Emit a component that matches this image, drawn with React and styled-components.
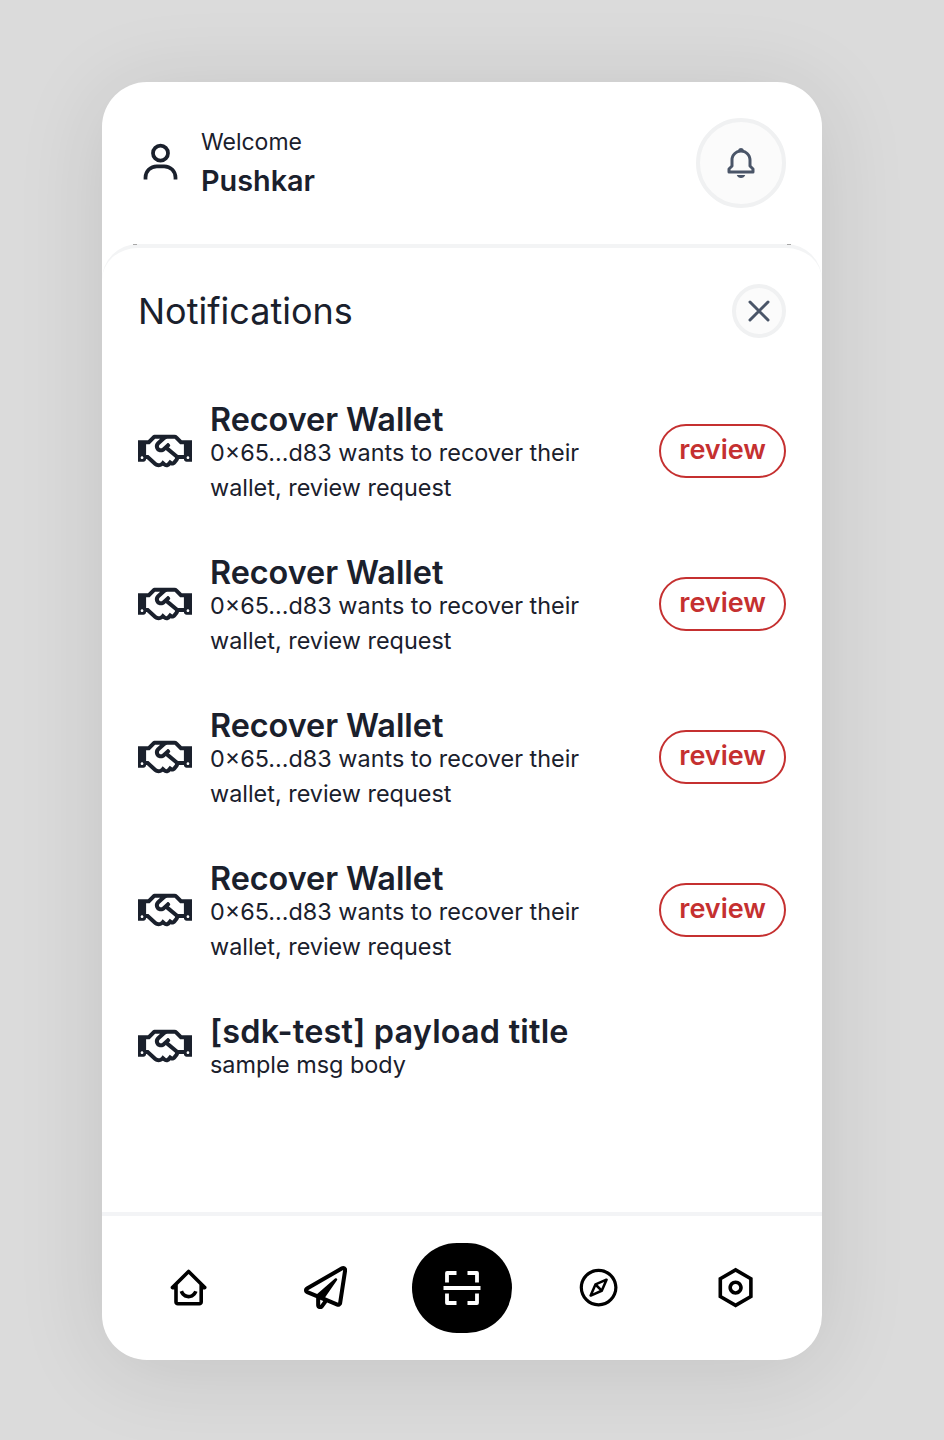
import React from "react";
import styled, { createGlobalStyle } from "styled-components";
import { BiUser, BiBell, BiHomeSmile } from "react-icons/bi";
import { FaRegHandshake, FaRegPaperPlane } from "react-icons/fa";
import { RiSettingsLine } from "react-icons/ri";
import { AiOutlineCompass } from "react-icons/ai";

const GlobalStyle = createGlobalStyle`
  * { box-sizing: border-box; }
  body {
    margin: 0;
    background: #dbdbdb;
    font-family: Inter, sans-serif;
    color: #1a202c;
  }
  h1, h2, h3, p { margin: 0; }
  svg { display: block; flex-shrink: 0; }
`;

const Page = styled.div`
  height: 1440px;
  padding: 82px 0 0 102px;
  overflow: hidden;
`;

const Phone = styled.main`
  display: flex;
  flex-direction: column;
  width: 720px;
  height: 1278px;
  border-radius: 45px;
  background: #fff;
  overflow: hidden;
  box-shadow: 0 9px 90px rgba(0, 0, 0, 0.11);
`;

const Header = styled.header`
  display: flex;
  align-items: center;
  justify-content: space-between;
  height: 162px;
  padding: 0 36px;
`;

const Profile = styled.div`
  display: flex;
  align-items: center;
  gap: 18px;

  > svg { margin-bottom: 1px; }
`;

const Greeting = styled.p`
  padding-top: 1px;
  font-size: 23px;
  line-height: 35px;
`;

const UserName = styled.p`
  font-size: 28.8px;
  line-height: 42px;
  font-weight: 600;
`;

const RoundButton = styled.button`
  display: grid;
  place-items: center;
  width: ${(p) => p.$size}px;
  height: ${(p) => p.$size}px;
  padding: 0;
  border: 4px solid #f0f1f2;
  border-radius: 50%;
  background: #fbfbfb;
  color: #4a5568;
`;

const Panel = styled.section`
  position: relative;
  flex: 1;
  padding: 36px;
  border-top: 4px solid #f3f4f5;
  border-radius: 36px 36px 0 0;

  &::before,
  &::after {
    content: "";
    position: absolute;
    top: -4px;
    width: 4px;
    height: 1px;
    background: #a8a8a8;
  }
  &::before { left: 31px; }
  &::after { right: 31px; }
`;

const PanelHeader = styled.div`
  display: flex;
  align-items: center;
  justify-content: space-between;
  height: 54px;
`;

const PanelTitle = styled.h1`
  font-size: 36px;
  line-height: 54px;
  font-weight: 400;
`;

const List = styled.div`
  display: flex;
  flex-direction: column;
  gap: 43px;
  padding-top: 58px;
`;

const Row = styled.article`
  display: flex;
  align-items: center;
  gap: 18px;
`;

const Message = styled.div`
  flex: 1;
  padding: 6px 0 1px;
`;

const MessageTitle = styled.h2`
  margin-bottom: -3px;
  font-size: 32.4px;
  line-height: 36px;
  font-weight: 600;
  letter-spacing: ${(p) => (p.$wide ? "0.2px" : "-0.04px")};
`;

const MessageBody = styled.p`
  width: 400px;
  font-size: 23.4px;
  line-height: 35px;
`;

const ReviewButton = styled.button`
  height: 54px;
  padding: 0 18px 4px;
  border: 2px solid #c53030;
  border-radius: 27px;
  background: #fff;
  color: #c53030;
  font: 600 27px Inter, sans-serif;
`;

const TabBar = styled.nav`
  display: flex;
  align-items: center;
  justify-content: space-between;
  height: 148px;
  padding: 0 36px;
  border-top: 4px solid #f3f4f6;
  color: #000;
`;

const Tab = styled.button`
  display: grid;
  place-items: center;
  width: 100px;
  height: 90px;
  padding: 0 ${(p) => (p.$centered ? 0 : 1)}px 1px ${(p) => (p.$centered ? 1 : 0)}px;
  border: 0;
  border-radius: 50px;
  background: ${(p) => (p.$primary ? "#000" : "transparent")};
  color: ${(p) => (p.$primary ? "#fff" : "#000")};
`;

const CloseIcon = () => (
  <svg width="24" height="24" viewBox="0 0 24 24" fill="none" stroke="currentColor" strokeWidth="3" strokeLinecap="round">
    <path d="M3 3l18 18M21 3L3 21" />
  </svg>
);

const ScanIcon = () => (
  <svg width="38" height="36" viewBox="0 0 38 36" fill="none" stroke="currentColor" strokeWidth="3.8" strokeLinejoin="round">
    <path d="M4 12.5V3h9.5M24.5 3H34v9.5M34 23.5V33h-9.5M13.5 33H4v-9.5M0.5 18h37" />
  </svg>
);

const request = { title: "Recover Wallet", body: "0×65...d83 wants to recover their wallet, review request", review: true };
const notifications = [
  request,
  request,
  request,
  request,
  { title: "[sdk-test] payload title", body: "sample msg body", wide: true },
];

export default function App() {
  return (
    <Page>
      <GlobalStyle />
      <Phone>
        <Header>
          <Profile>
            <BiUser size={45} />
            <div>
              <Greeting>Welcome</Greeting>
              <UserName>Pushkar</UserName>
            </div>
          </Profile>
          <RoundButton $size={90} aria-label="Notifications">
            <BiBell size={36} />
          </RoundButton>
        </Header>
        <Panel>
          <PanelHeader>
            <PanelTitle>Notifications</PanelTitle>
            <RoundButton $size={54} aria-label="Close">
              <CloseIcon />
            </RoundButton>
          </PanelHeader>
          <List>
            {notifications.map((n, i) => (
              <Row key={i}>
                <FaRegHandshake size={54} />
                <Message>
                  <MessageTitle $wide={n.wide}>{n.title}</MessageTitle>
                  <MessageBody>{n.body}</MessageBody>
                </Message>
                {n.review && <ReviewButton>review</ReviewButton>}
              </Row>
            ))}
          </List>
        </Panel>
        <TabBar>
          <Tab $centered aria-label="Home"><BiHomeSmile size={43.2} /></Tab>
          <Tab $centered aria-label="Send"><FaRegPaperPlane size={43.2} /></Tab>
          <Tab $primary aria-label="Scan"><ScanIcon /></Tab>
          <Tab aria-label="Explore"><AiOutlineCompass size={43.2} /></Tab>
          <Tab aria-label="Settings"><RiSettingsLine size={43.2} /></Tab>
        </TabBar>
      </Phone>
    </Page>
  );
}
